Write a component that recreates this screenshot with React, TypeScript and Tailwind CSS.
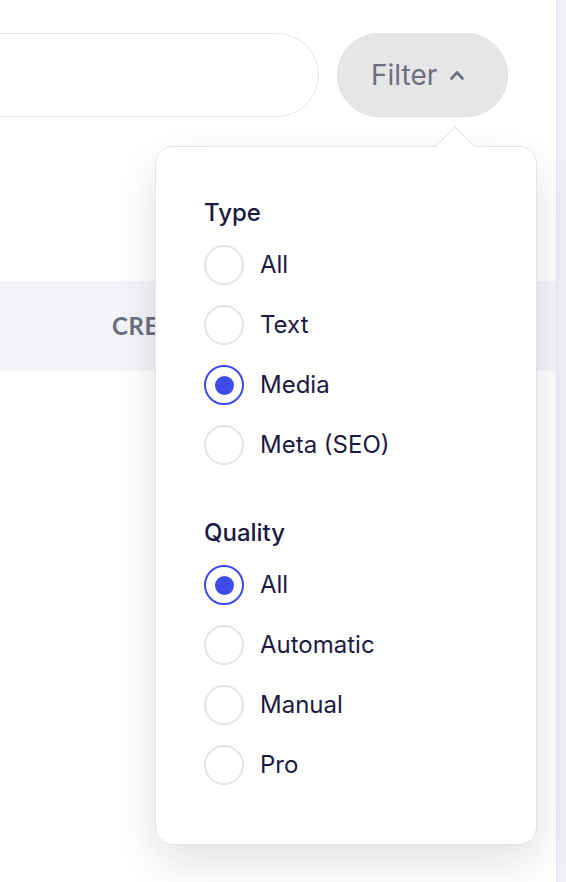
import { useState } from 'react';

const typeOptions = ['All', 'Text', 'Media', 'Meta (SEO)'];
const qualityOptions = ['All', 'Automatic', 'Manual', 'Pro'];

function Radio({ label, checked, onClick }: { label: string; checked: boolean; onClick: () => void }) {
  return (
    <button type="button" onClick={onClick} className="flex items-center gap-4 h-10 text-left">
      <span
        className={`w-10 h-10 rounded-full flex items-center justify-center border-2 ${
          checked ? 'border-[#3d4be8]' : 'border-[#e4e5ea]'
        }`}
      >
        {checked && <span className="w-[19px] h-[19px] rounded-full bg-[#3d4be8]" />}
      </span>
      <span className="text-[24px] leading-8 text-[#1c1a42]">{label}</span>
    </button>
  );
}

export default function App() {
  const [type, setType] = useState('Media');
  const [quality, setQuality] = useState('All');

  return (
    <div className="relative w-[566px] h-[882px] overflow-hidden bg-white flex font-['Inter',sans-serif]">
      <div className="relative w-[556px] h-full">
        {/* Search + filter */}
        <div className="flex items-center gap-[18px] pt-[33px] pr-[48px] -ml-[80px]">
          <div className="flex-1 h-[84px] rounded-full border-[1.5px] border-[#e3e5ea] bg-white" />
          <button className="w-[171px] h-[84px] rounded-full bg-[#e6e6e8] border border-[#dedee1] flex items-center pl-[33px] gap-[13px] text-[28px] text-[#6b6f7e]">
            Filter
            <svg width="14" height="10" viewBox="0 0 14 10" fill="none">
              <path d="M1.5 8.5 7 2.5l5.5 6" stroke="#6b6f7e" strokeWidth="2.6" strokeLinecap="round" strokeLinejoin="round" />
            </svg>
          </button>
        </div>

        {/* Table header */}
        <div className="mt-[164px] h-[90px] bg-[#f3f4f7] flex items-center pl-[112px]">
          <span className="text-[24px] font-bold tracking-wide text-[#6b6f7e] font-['Lato',sans-serif]">CREATED</span>
        </div>

        {/* Popover */}
        <div className="absolute left-[155px] top-[146px] w-[382px] h-[699px] bg-white border border-[#e2e4e9] rounded-[18px] shadow-[0_18px_44px_rgba(20,20,40,0.12)] pt-[50px] pl-[48px]">
          <div className="absolute left-[285px] -top-[15px] w-[28px] h-[28px] bg-white border-t border-l border-[#e2e4e9] rotate-45" />
          <div className="relative">
            <div className="text-[24px] leading-8 font-medium text-[#1c1a42] mb-4">Type</div>
            <div className="flex flex-col gap-5">
              {typeOptions.map(o => (
                <Radio key={o} label={o} checked={type === o} onClick={() => setType(o)} />
              ))}
            </div>
            <div className="text-[24px] leading-8 font-medium text-[#1c1a42] mt-[52px] mb-4">Quality</div>
            <div className="flex flex-col gap-5">
              {qualityOptions.map(o => (
                <Radio key={o} label={o} checked={quality === o} onClick={() => setQuality(o)} />
              ))}
            </div>
          </div>
        </div>
      </div>
      <div className="w-[10px] h-full bg-[#eef0f5] border-l border-[#e2e5ed]" />
    </div>
  );
}
